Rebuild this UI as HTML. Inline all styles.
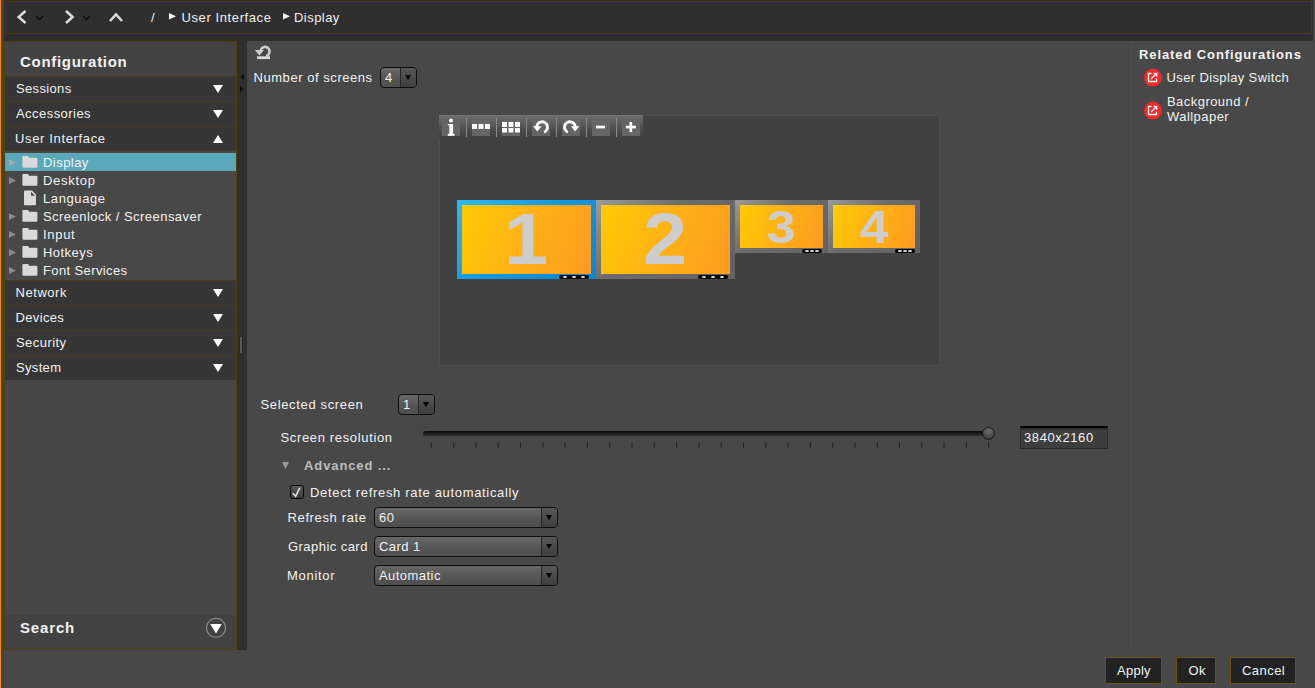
<!DOCTYPE html>
<html><head><meta charset="utf-8">
<style>
*{margin:0;padding:0;box-sizing:border-box}
html,body{width:1315px;height:688px;overflow:hidden;background:#484848;font-family:"Liberation Sans",sans-serif;color:#f2f2f2}
.a{position:absolute}
.t{position:absolute;font-size:13px;line-height:13px;white-space:nowrap;letter-spacing:0.45px}
.b{font-weight:bold}
#orange{left:0;top:0;width:1px;height:688px;background:#ff8c00}
#lstrip{left:1px;top:0;width:3px;height:688px;background:#424242}
#hdr{left:4px;top:0;width:1309px;height:41px;background:#2e2e2e}
#tbar{left:5px;top:1px;width:1307px;height:33px;border:1px solid #4b3b03;background:#2f2f2f}
#side{left:4px;top:41px;width:233px;height:609px;border:1px solid #524000;background:#474747}
#split{left:237px;top:41px;width:10px;height:609px;background:#2f2f2f}
.cat{position:absolute;left:0;width:231px;height:25px;background:#363636;border-top:1px solid #473c1c}
.tri{position:absolute;width:0;height:0;border-left:5px solid transparent;border-right:5px solid transparent;border-top:8px solid #fff}
.triu{position:absolute;width:0;height:0;border-left:5px solid transparent;border-right:5px solid transparent;border-bottom:8px solid #fff}
.btn{position:absolute;background:#222;border:1px solid #6b5300}
.combo{position:absolute;border:1px solid #0e0e0e;border-radius:4px;background:linear-gradient(#686868,#555 60%,#4e4e4e);overflow:hidden}
.combo .dd{position:absolute;right:0;top:0;bottom:0;background:linear-gradient(#575757,#3e3e3e);border-left:1px solid #262626}
.combo .dd i{position:absolute;left:50%;top:50%;margin-left:-3.5px;margin-top:-2.5px;width:0;height:0;border-left:3.8px solid transparent;border-right:3.8px solid transparent;border-top:5px solid #000}
.tb{position:absolute;top:118px;width:18px;height:18px;background:#656565}
.sep{position:absolute;top:118px;width:1px;height:19px;background:#8a8a8a}
.mon{position:absolute;background:linear-gradient(135deg,#9a9a9a,#6c6c6c 40%,#626262)}
.mon.sel{background:linear-gradient(135deg,#2fb8f2,#1496dc 50%,#0b86d4)}
.scr{position:absolute;left:5px;top:5px;right:5px;bottom:5px;background:linear-gradient(112deg,#ffcb04,#ffb115 50%,#fe9a22);color:#cdcdcd;font-weight:bold;text-align:center}
.badge{position:absolute;height:4px;background:#050505;border-radius:2px}
.badge b{position:absolute;top:1px;width:4px;height:2px;background:#e6e6e6;border-radius:50%}
</style></head><body>
<div class="a" id="orange"></div>
<div class="a" id="lstrip"></div>
<div class="a" id="hdr"></div>
<div class="a" id="tbar"></div>

<!-- breadcrumb icons -->
<svg class="a" style="left:0;top:0" width="360" height="34">
 <polyline points="25.5,11 18.7,17 25.5,23" fill="none" stroke="#dcdcdc" stroke-width="2.5"/>
 <polyline points="36,16 39.5,19.5 43,16" fill="none" stroke="#0a0a0a" stroke-width="1.3"/>
 <polyline points="66,11 72.6,17 66,23" fill="none" stroke="#dcdcdc" stroke-width="2.5"/>
 <polyline points="83,16 86.5,19.5 90,16" fill="none" stroke="#0a0a0a" stroke-width="1.3"/>
 <polyline points="110,21 116,14.3 122,21" fill="none" stroke="#dcdcdc" stroke-width="2.5"/>
 <polygon points="169,13 176,16.25 169,19.5" fill="#f4f4f4"/>
 <polygon points="283,13 290,16.25 283,19.5" fill="#f4f4f4"/>
</svg>
<div class="t" style="left:151px;top:11px">/</div>
<div class="t" style="left:181.5px;top:11px;letter-spacing:0.6px">User Interface</div>
<div class="t" style="left:294px;top:11px">Display</div>

<!-- sidebar -->
<div class="a" id="side">
 <div class="a" style="left:0;top:0;width:231px;height:34px;background:#434343"></div>
 <div class="t b" style="left:15px;top:12px;font-size:15px;line-height:15px;letter-spacing:0.7px">Configuration</div>
 <div class="cat" style="top:34px"></div>
 <div class="cat" style="top:59px"></div>
 <div class="cat" style="top:84px;height:25px;border-bottom:1px solid #473c1c"></div>
 <div class="a" style="left:0;top:109px;width:231px;height:129px;background:#484848"></div>
 <div class="a" style="left:0;top:111px;width:231px;height:18px;background:#5aa8ba"></div>
 <div class="cat" style="top:238px"></div>
 <div class="cat" style="top:263px"></div>
 <div class="cat" style="top:288px"></div>
 <div class="cat" style="top:313px"></div>
 <div class="t" style="left:11px;top:40px;letter-spacing:0.35px">Sessions</div>
 <div class="t" style="left:11px;top:65px">Accessories</div>
 <div class="t" style="left:10px;top:90px;letter-spacing:0.65px">User Interface</div>
 <div class="t" style="left:10.5px;top:244px;letter-spacing:0.55px">Network</div>
 <div class="t" style="left:10.5px;top:269px;letter-spacing:0.35px">Devices</div>
 <div class="t" style="left:11px;top:294px">Security</div>
 <div class="t" style="left:11px;top:319px;letter-spacing:0.33px">System</div>
 <svg class="a" style="left:0;top:0" width="231" height="340">
  <polygon points="208,43 218,43 213,51" fill="#fff"/>
  <polygon points="208,68 218,68 213,76" fill="#fff"/>
  <polygon points="208,101 218,101 213,93" fill="#fff"/>
  <polygon points="208,247 218,247 213,255" fill="#fff"/>
  <polygon points="208,272 218,272 213,280" fill="#fff"/>
  <polygon points="208,297 218,297 213,305" fill="#fff"/>
  <polygon points="208,322 218,322 213,330" fill="#fff"/>
  <!-- tree expanders -->
  <polygon points="4,117 11,120.5 4,124" fill="#a3aeb1"/>
  <polygon points="4,135 11,138.5 4,142" fill="#8a8a8a"/>
  <polygon points="4,171 11,174.5 4,178" fill="#8a8a8a"/>
  <polygon points="4,189 11,192.5 4,196" fill="#8a8a8a"/>
  <polygon points="4,207 11,210.5 4,214" fill="#8a8a8a"/>
  <polygon points="4,225 11,228.5 4,232" fill="#8a8a8a"/>
  <!-- folders -->
  <g fill="#d9d9d9">
   <rect x="17.4" y="114.1" width="6.3" height="3" rx="1"/><rect x="17.4" y="115.8" width="15" height="10" rx="1"/>
   <rect x="17.4" y="132.1" width="6.3" height="3" rx="1"/><rect x="17.4" y="133.8" width="15" height="10" rx="1"/>
   <rect x="17.4" y="168.1" width="6.3" height="3" rx="1"/><rect x="17.4" y="169.8" width="15" height="10" rx="1"/>
   <rect x="17.4" y="186.1" width="6.3" height="3" rx="1"/><rect x="17.4" y="187.8" width="15" height="10" rx="1"/>
   <rect x="17.4" y="204.1" width="6.3" height="3" rx="1"/><rect x="17.4" y="205.8" width="15" height="10" rx="1"/>
   <rect x="17.4" y="222.1" width="6.3" height="3" rx="1"/><rect x="17.4" y="223.8" width="15" height="10" rx="1"/>
   <path d="M20,148.5 h7 l4,4 v9.8 a1,1 0 0 1 -1,1 h-10 a1,1 0 0 1 -1,-1 v-12.8 a1,1 0 0 1 1,-1 z"/>
  </g>
  <polygon points="26,149.8 30,153.8 26,153.8" fill="#4a4a4a"/>
 </svg>
 <div class="t" style="left:38px;top:114px">Display</div>
 <div class="t" style="left:38px;top:132px;letter-spacing:0.7px">Desktop</div>
 <div class="t" style="left:38px;top:150px;letter-spacing:0.6px">Language</div>
 <div class="t" style="left:38px;top:168px">Screenlock / Screensaver</div>
 <div class="t" style="left:38px;top:186px;letter-spacing:0.7px">Input</div>
 <div class="t" style="left:38px;top:204px">Hotkeys</div>
 <div class="t" style="left:38px;top:222px;letter-spacing:0.38px">Font Services</div>
 <div class="a" style="left:0;top:573px;width:231px;height:34px;background:#424242"></div>
 <div class="t b" style="left:15px;top:578px;font-size:15px;line-height:15px;letter-spacing:0.85px">Search</div>
 <svg class="a" style="left:200px;top:575px" width="22" height="22">
  <circle cx="11" cy="10.8" r="9.5" fill="none" stroke="#8e8e8e" stroke-width="1.1"/>
  <polygon points="5.3,7 16.7,7 11,16.4" fill="#fff"/>
 </svg>
</div>
<div class="a" id="split"></div>
<svg class="a" style="left:237px;top:60px" width="10" height="300">
 <polygon points="7,14 3.5,17 7,20" fill="#0c0c0c"/>
 <polygon points="3,26 6.5,29 3,32" fill="#0c0c0c"/>
 <rect x="2.5" y="276" width="3" height="18" rx="1.5" fill="#575757" stroke="#262626" stroke-width="1"/>
</svg>

<!-- content -->
<svg class="a" style="left:250px;top:40px" width="30" height="24">
 <path d="M 16.2 15.9 A 4.6 4.6 0 1 0 10.7 9.9" fill="none" stroke="#cecece" stroke-width="2.6"/>
 <polygon points="4.8,10 14,10 9.4,15.5" fill="#cecece"/>
 <rect x="7" y="16.3" width="13" height="2.8" fill="#d6d6d6"/>
</svg>
<div class="t" style="left:253.5px;top:71px;letter-spacing:0.55px">Number of screens</div>
<div class="combo" style="left:380px;top:67px;width:37px;height:21px"><div class="dd" style="width:16px"><i></i></div></div>
<div class="t" style="left:385px;top:71px">4</div>

<!-- preview -->
<div class="a" style="left:439px;top:115px;width:501px;height:251px;background:#414141;border:1px solid #4f4f4f"></div>
<div class="a" style="left:439px;top:115px;width:204px;height:23px;background:linear-gradient(#777 0,#6a6a6a 8%,#4a4a4a 70%,#414141 100%)"></div>
<div class="tb" style="left:442px"></div>
<div class="tb" style="left:472px"></div>
<div class="tb" style="left:502px"></div>
<div class="tb" style="left:532px"></div>
<div class="tb" style="left:562px"></div>
<div class="tb" style="left:592px"></div>
<div class="tb" style="left:622px"></div>
<div class="sep" style="left:466px"></div>
<div class="sep" style="left:496px"></div>
<div class="sep" style="left:526px"></div>
<div class="sep" style="left:556px"></div>
<div class="sep" style="left:586px"></div>
<div class="sep" style="left:616px"></div>
<svg class="a" style="left:439px;top:115px" width="204" height="23">
 <g fill="#fafafa">
  <circle cx="12" cy="5.4" r="2"/>
  <rect x="10.3" y="9" width="3.8" height="11.5"/><rect x="8.8" y="18.8" width="6.7" height="2"/><rect x="8.8" y="9" width="2" height="1.5"/>
  <rect x="33" y="9" width="5" height="5"/><rect x="39.5" y="9" width="5" height="5"/><rect x="46" y="9" width="5" height="5"/>
  <rect x="63" y="7" width="5" height="5"/><rect x="69.5" y="7" width="5" height="5"/><rect x="76" y="7" width="5" height="5"/>
  <rect x="63" y="13" width="5" height="4.5"/><rect x="69.5" y="13" width="5" height="4.5"/><rect x="76" y="13" width="5" height="4.5"/>
  <rect x="157" y="10.7" width="9" height="2.7"/>
  <rect x="186.8" y="10.7" width="10.1" height="2.7"/><rect x="190.5" y="7" width="2.7" height="10"/>
  <polygon points="94,11.3 102.6,11.3 98.4,16.6"/>
  <polygon points="132,11.3 140.4,11.3 136,16.6"/>
 </g>
 <path d="M 106.15 16.62 A 5.4 5.4 0 1 0 97.73 11.26" fill="none" stroke="#fafafa" stroke-width="2.8" stroke-linecap="round"/>
 <path d="M 127.85 16.62 A 5.4 5.4 0 1 1 136.27 11.26" fill="none" stroke="#fafafa" stroke-width="2.8" stroke-linecap="round"/>
</svg>

<!-- monitors -->
<div class="mon sel" style="left:457px;top:200px;width:139px;height:79px"><div class="scr" style="font-size:72px;line-height:69px"><span style="display:inline-block;transform:scaleX(1.1)">1</span></div><div class="badge" style="left:102px;top:75px;width:30px"><b style="left:4px"></b><b style="left:13px"></b><b style="left:22px"></b></div></div>
<div class="mon" style="left:596px;top:200px;width:139px;height:79px"><div class="scr" style="font-size:72px;line-height:69px"><span style="display:inline-block;transform:scaleX(1.1)">2</span></div><div class="badge" style="left:102px;top:75px;width:30px"><b style="left:4px"></b><b style="left:13px"></b><b style="left:22px"></b></div></div>
<div class="mon" style="left:735px;top:200px;width:93px;height:53px"><div class="scr" style="font-size:47px;line-height:43px"><span style="display:inline-block;transform:scaleX(1.1)">3</span></div><div class="badge" style="left:67px;top:49px;width:20px"><b style="left:3px"></b><b style="left:8px"></b><b style="left:13px"></b></div></div>
<div class="mon" style="left:828px;top:200px;width:92px;height:53px"><div class="scr" style="font-size:47px;line-height:43px"><span style="display:inline-block;transform:scaleX(1.1)">4</span></div><div class="badge" style="left:67px;top:49px;width:20px"><b style="left:3px"></b><b style="left:8px"></b><b style="left:13px"></b></div></div>

<!-- selected screen -->
<div class="t" style="left:260.5px;top:398px;letter-spacing:0.65px">Selected screen</div>
<div class="combo" style="left:398px;top:394px;width:37px;height:21px"><div class="dd" style="width:16px"><i></i></div></div>
<div class="t" style="left:403px;top:398px">1</div>
<div class="t" style="left:280.5px;top:431px;letter-spacing:0.65px">Screen resolution</div>
<!-- slider -->
<div class="a" style="left:423px;top:431px;width:571px;height:6px;border-radius:3px;background:linear-gradient(#0c0c0c,#1e1e1e 50%,#333 85%,#5a5a5a)"></div>
<svg class="a" style="left:420px;top:440px" width="580" height="12" id="ticks"><rect x="10.90" y="2" width="1" height="6" fill="#22252a"/><rect x="33.19" y="2" width="1" height="6" fill="#22252a"/><rect x="55.48" y="2" width="1" height="6" fill="#22252a"/><rect x="77.77" y="2" width="1" height="6" fill="#22252a"/><rect x="100.06" y="2" width="1" height="6" fill="#22252a"/><rect x="122.35" y="2" width="1" height="6" fill="#22252a"/><rect x="144.64" y="2" width="1" height="6" fill="#22252a"/><rect x="166.93" y="2" width="1" height="6" fill="#22252a"/><rect x="189.22" y="2" width="1" height="6" fill="#22252a"/><rect x="211.51" y="2" width="1" height="6" fill="#22252a"/><rect x="233.80" y="2" width="1" height="6" fill="#22252a"/><rect x="256.09" y="2" width="1" height="6" fill="#22252a"/><rect x="278.38" y="2" width="1" height="6" fill="#22252a"/><rect x="300.67" y="2" width="1" height="6" fill="#22252a"/><rect x="322.96" y="2" width="1" height="6" fill="#22252a"/><rect x="345.25" y="2" width="1" height="6" fill="#22252a"/><rect x="367.54" y="2" width="1" height="6" fill="#22252a"/><rect x="389.83" y="2" width="1" height="6" fill="#22252a"/><rect x="412.12" y="2" width="1" height="6" fill="#22252a"/><rect x="434.41" y="2" width="1" height="6" fill="#22252a"/><rect x="456.70" y="2" width="1" height="6" fill="#22252a"/><rect x="478.99" y="2" width="1" height="6" fill="#22252a"/><rect x="501.28" y="2" width="1" height="6" fill="#22252a"/><rect x="523.57" y="2" width="1" height="6" fill="#22252a"/><rect x="545.86" y="2" width="1" height="6" fill="#22252a"/><rect x="568.15" y="2" width="1" height="6" fill="#22252a"/></svg>
<div class="a" style="left:982px;top:427px;width:13px;height:13px;border-radius:50%;border:1px solid #1a1a1a;background:radial-gradient(circle at 50% 30%,#6e6e6e,#4a4a4a 60%,#333)"></div>
<div class="a" style="left:1020px;top:426px;width:88px;height:23px;background:linear-gradient(#2a2a2a,#3e3e3e 3px);border:1px solid #2a2a2a;border-top:2px solid #050505"></div>
<div class="t" style="left:1024px;top:431px;letter-spacing:0.6px">3840x2160</div>
<svg class="a" style="left:280px;top:460px" width="12" height="12"><polygon points="2,2 9,2 5.5,9" fill="#9a9a9a"/></svg>
<div class="t b" style="left:304px;top:459px;color:#bdbdbd;letter-spacing:0.9px">Advanced ...</div>
<div class="a" style="left:290px;top:485px;width:14px;height:14px;border-radius:2.5px;background:linear-gradient(#5a5a5a,#454545 60%,#3c3c3c);border:1.5px solid #080808"></div>
<svg class="a" style="left:290px;top:485px" width="14" height="14"><polyline points="2.8,8.2 5.6,11.3 9.8,2.8" fill="none" stroke="#e0e0e0" stroke-width="1.6"/></svg>
<div class="t" style="left:310px;top:486px;letter-spacing:0.67px">Detect refresh rate automatically</div>
<div class="t" style="left:287.5px;top:511px;letter-spacing:0.63px">Refresh rate</div>
<div class="combo" style="left:374px;top:507px;width:184px;height:21px"><div class="dd" style="width:16px"><i></i></div></div>
<div class="t" style="left:379px;top:511px">60</div>
<div class="t" style="left:288px;top:540px">Graphic card</div>
<div class="combo" style="left:374px;top:536px;width:184px;height:21px"><div class="dd" style="width:16px"><i></i></div></div>
<div class="t" style="left:379px;top:540px">Card 1</div>
<div class="t" style="left:287px;top:569px;letter-spacing:0.7px">Monitor</div>
<div class="combo" style="left:374px;top:565px;width:184px;height:21px"><div class="dd" style="width:16px"><i></i></div></div>
<div class="t" style="left:379px;top:569px">Automatic</div>

<!-- right panel -->
<div class="t b" style="left:1139px;top:48px;letter-spacing:0.9px">Related Configurations</div>
<svg class="a" style="left:1143px;top:68px" width="20" height="20">
 <circle cx="10" cy="9.6" r="9" fill="#f02a2a"/>
 <path d="M 8.5 5.5 H 5.5 V 13.5 H 13.5 V 10.5" fill="none" stroke="#fff" stroke-width="1.3"/>
 <path d="M 8 11 L 13.5 5.5 M 10.5 5.3 H 13.7 V 8.5" fill="none" stroke="#fff" stroke-width="1.3"/>
</svg>
<svg class="a" style="left:1143px;top:101px" width="20" height="20">
 <circle cx="10" cy="9.6" r="9" fill="#f02a2a"/>
 <path d="M 8.5 5.5 H 5.5 V 13.5 H 13.5 V 10.5" fill="none" stroke="#fff" stroke-width="1.3"/>
 <path d="M 8 11 L 13.5 5.5 M 10.5 5.3 H 13.7 V 8.5" fill="none" stroke="#fff" stroke-width="1.3"/>
</svg>
<div class="t" style="left:1166.5px;top:71px;letter-spacing:0.37px">User Display Switch</div>
<div class="t" style="left:1167px;top:95px">Background /</div>
<div class="t" style="left:1167px;top:110px">Wallpaper</div>

<!-- buttons -->
<div class="btn" style="left:1105px;top:657px;width:57px;height:27px"></div>
<div class="btn" style="left:1176px;top:657px;width:40px;height:27px"></div>
<div class="btn" style="left:1230px;top:657px;width:66px;height:27px"></div>
<div class="t" style="left:1117px;top:664px;letter-spacing:0.25px">Apply</div>
<div class="t" style="left:1188.5px;top:664px">Ok</div>
<div class="t" style="left:1242px;top:664px">Cancel</div>

<!-- right line -->
<div class="a" style="left:1131px;top:41px;width:1px;height:609px;background:#6b5300"></div>
</body></html>
